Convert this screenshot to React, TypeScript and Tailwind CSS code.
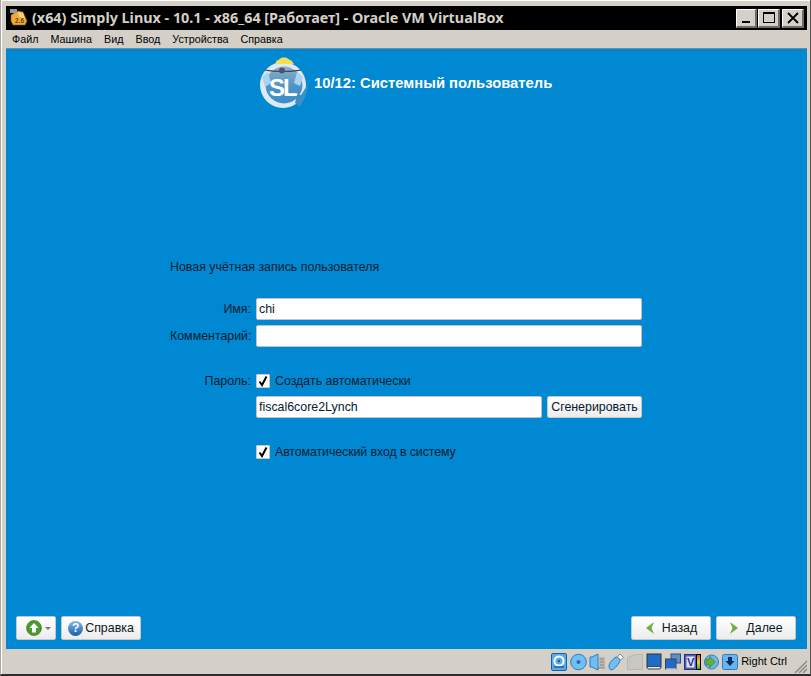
import React from 'react';

const sans = "font-['Liberation_Sans',Arial,sans-serif]";
const tahoma = "font-['Noto_Sans',sans-serif]";

function Check() {
  return (
    <div className="w-[14px] h-[14px] bg-white border border-[#c8c8c8] rounded-[1px] flex items-center justify-center">
      <svg width="12" height="12" viewBox="0 0 12 12">
        <path d="M2.5 6.5 L5 10 L9.5 1.5" fill="none" stroke="#000" strokeWidth="2" />
      </svg>
    </div>
  );
}

function Logo() {
  return (
    <svg width="50" height="52" viewBox="0 0 50 52">
      <defs>
        <linearGradient id="disc" x1="0" y1="0" x2="0" y2="1">
          <stop offset="0" stopColor="#8fb0cc" />
          <stop offset="0.55" stopColor="#4a93c6" />
          <stop offset="1" stopColor="#3b8fca" />
        </linearGradient>
      </defs>
      <path d="M17 7 C19 2 22 0.5 25 0.5 C28 0.5 31 2 34 7 Z" fill="#f2de5a" />
      <circle cx="24" cy="28" r="23" fill="#dfe9f2" />
      <circle cx="25" cy="28" r="18.5" fill="url(#disc)" />
      <path d="M18 3 C21 5 28 5 32 3 L35 7 L16 7 Z" fill="#f2de5a" />
      <path d="M6 13 C16 15 32 15 42 13" fill="none" stroke="#3c4654" strokeWidth="1.2" />
      <circle cx="23" cy="13.5" r="3" fill="#4c5666" />
      <path d="M3 20 L9 15 L12 26 L6 30 Z" fill="#a9d3f0" />
      <path d="M44 20 L38 15 L35 26 L41 29 Z" fill="#a9d3f0" />
      <text x="10" y="39" fontFamily="Liberation Sans" fontWeight="700" fontSize="24" fill="#fff" letterSpacing="-2">SL</text>
      <path d="M36 46 L38 38 L42 38 L49 27 L47 38 L41 50 Z" fill="#3d8fc9" />
    </svg>
  );
}

function VboxIcon() {
  return (
    <svg width="18" height="18" viewBox="0 0 18 18">
      <path d="M1 6 L8 2 L13 3 L17 12 L15 16 L3 16 L1 12 Z" fill="#f0ab3c" stroke="#8d5a14" strokeWidth="0.6" />
      <path d="M8 3 L13 4 L15 10 L9 8 Z" fill="#f7d377" />
      <rect x="0" y="0" width="7" height="4" fill="#9a9a9a" />
      <text x="5" y="14" fontFamily="Liberation Sans" fontWeight="700" fontSize="6.5" fill="#6f430c">2.6</text>
    </svg>
  );
}

function WinButton({ w, children }: { w: string; children: React.ReactNode }) {
  return (
    <div className={`${w} h-[19px] bg-[#d4d0c8] border-t border-l border-white border-r-2 border-b-2 border-r-[#6e6c66] border-b-[#6e6c66] flex items-center justify-center`}>
      {children}
    </div>
  );
}

function Bevel({ w, children }: { w: string; children: React.ReactNode }) {
  return (
    <div className={`${w} h-[24px] rounded-[2px] border border-[#c4c8cc] bg-gradient-to-b from-white to-[#ececec] flex items-center justify-center gap-[3px] text-[12.4px] text-[#0c1a24]`}>
      {children}
    </div>
  );
}

function UpIcon() {
  return (
    <svg width="16" height="16" viewBox="0 0 16 16">
      <circle cx="8" cy="8" r="7.5" fill="#4b9a2c" stroke="#356f1f" strokeWidth="0.6" />
      <path d="M8 3 L12.5 8 L10 8 L10 12.5 L6 12.5 L6 8 L3.5 8 Z" fill="#fff" />
    </svg>
  );
}

function HelpIcon() {
  return (
    <div className="w-[15px] h-[15px] rounded-full bg-gradient-to-b from-[#7dbbec] to-[#125fa8] text-white text-[12px] font-bold leading-[15px] text-center">
      ?
    </div>
  );
}

function Chevron({ flip }: { flip?: boolean }) {
  return (
    <svg width="10" height="14" viewBox="0 0 10 14">
      <path
        d={flip ? 'M1 1 L9 7 L1 13 L3.5 7 Z' : 'M9 1 L1 7 L9 13 L6.5 7 Z'}
        fill="#6fae45"
      />
    </svg>
  );
}

function StatusIcons() {
  return (
    <div className="flex items-center h-[18px]">
      {/* hdd */}
      <svg width="16" height="18" viewBox="0 0 16 18" className="mr-[3px]">
        <rect x="0.5" y="0.5" width="15" height="17" rx="1.5" fill="#58aee8" stroke="#1c5fa8" />
        <circle cx="8" cy="8" r="4.6" fill="none" stroke="#fff" strokeWidth="2" />
        <circle cx="8" cy="8" r="1.2" fill="#1c5fa8" />
        <path d="M3 14 H13" stroke="#1c5fa8" strokeWidth="1.5" />
      </svg>
      {/* cd */}
      <svg width="17" height="18" viewBox="0 0 17 18" className="mr-[2px]">
        <circle cx="8.5" cy="9" r="7.8" fill="#72c0f0" stroke="#2a7cc4" />
        <circle cx="8.5" cy="9" r="2" fill="#1e6eb8" />
      </svg>
      {/* audio */}
      <svg width="17" height="18" viewBox="0 0 17 18" className="mr-[2px]">
        <rect x="10" y="4" width="6" height="11" fill="#bdb9b1" />
        <path d="M11 6 H15 M11 9 H15 M11 12 H15 M9 15 H16" stroke="#8b8880" />
        <path d="M1 4 H3 L9 1 V17 L3 14 H1 Z" fill="#74bdf0" stroke="#2a7cc4" />
      </svg>
      {/* usb */}
      <svg width="16" height="18" viewBox="0 0 16 18" className="mr-[3px]">
        <path d="M1 13 C1 9 7 4 9 4 L12 7 C12 10 6 17 3 17 C2 17 1 15 1 13 Z" fill="#74bdf0" stroke="#2a7cc4" />
        <path d="M9.5 4 L12 1 L15.5 4.5 L12.5 7 Z" fill="#fff" stroke="#7a8a98" />
      </svg>
      {/* shared folder, disabled */}
      <svg width="16" height="18" viewBox="0 0 16 18" className="mr-[3px]">
        <path d="M0.5 4.5 L8 1.5 H15.5 V16.5 H0.5 Z" fill="#c9c7c2" stroke="#b9b6b0" />
      </svg>
      {/* display */}
      <svg width="16" height="18" viewBox="0 0 16 18" className="mr-[3px]">
        <rect x="1" y="1" width="14" height="13" fill="#1f6cc8" stroke="#333" />
        <path d="M1 14 L2 16 H14 L15 14" fill="#e6e6e6" stroke="#444" />
      </svg>
      {/* shared screens */}
      <svg width="16" height="18" viewBox="0 0 16 18" className="mr-[3px]">
        <rect x="6" y="1" width="9.5" height="9" fill="#5d8fcc" stroke="#2b4f86" />
        <rect x="0.5" y="6" width="10.5" height="10" fill="#1f6cc8" stroke="#444" />
        <path d="M1 16 H11" stroke="#fff" />
      </svg>
      {/* vt-x + cpu bar */}
      <div className="flex items-center mr-[3px]">
        <svg width="13" height="18" viewBox="0 0 13 18">
          <rect x="0.5" y="1.5" width="12" height="15" fill="#4f5fc0" stroke="#273076" />
          <rect x="2.5" y="3.5" width="8" height="11" fill="#dfe2f5" />
          <text x="3" y="13" fontFamily="Liberation Sans" fontWeight="700" fontSize="11" fill="#2a3590">V</text>
        </svg>
        <div className="w-[5px] h-[16px] border border-black bg-gradient-to-b from-[#e44b1f] via-[#e8d72e] to-[#3aa13a] ml-[-1px]" />
      </div>
      {/* network */}
      <svg width="15" height="18" viewBox="0 0 16 18" className="mr-[3px]">
        <circle cx="8" cy="9" r="7.5" fill="#6fb7e8" stroke="#2a7cc4" />
        <path d="M6 3 L12 9 L6 15 L6 12 L2 12 L2 6 L6 6 Z" fill="#62b03a" stroke="#2f7a1e" strokeWidth="0.6" />
      </svg>
      {/* host key */}
      <svg width="16" height="18" viewBox="0 0 16 18">
        <rect x="0.5" y="1.5" width="15" height="15" rx="2" fill="#67b5ea" stroke="#2a7cc4" />
        <path d="M6 4 H10 V8 H12.5 L8 13 L3.5 8 H6 Z" fill="#0f2f6c" />
      </svg>
    </div>
  );
}

export default function App() {
  return (
    <div className={`${sans} w-[811px] h-[676px] overflow-hidden bg-[#d4d0c8] border-l border-[#aaa5a2] border-r border-r-[#55544f] border-b-2 border-b-[#2e2c2a] flex flex-col`}>
      <div className="flex-1 flex flex-col border-l border-t border-white pl-1 pr-[3px] pt-[5px]">
        <div className="h-6 bg-black flex items-center pl-[4px] pr-[3px] shrink-0">
          <VboxIcon />
          <div className={`${tahoma} ml-[4px] text-[14.35px] font-bold text-[#d4d0c8] whitespace-nowrap flex-1`}>
            (x64) Simply Linux - 10.1 - x86_64 [Работает] - Oracle VM VirtualBox
          </div>
          <div className="flex items-center">
            <WinButton w="w-[21px]">
              <div className="flex justify-center pt-[9px]"><div className="w-[8px] h-[2px] bg-black" /></div>
            </WinButton>
            <div className="ml-px">
              <WinButton w="w-[22px]">
                <div className="w-[12px] h-[11px] border border-black border-t-2" />
              </WinButton>
            </div>
            <div className="ml-[2px]">
              <WinButton w="w-[22px]">
                <svg width="12" height="12" viewBox="0 0 12 12"><path d="M1 1 L11 11 M11 1 L1 11" stroke="#000" strokeWidth="1.8" /></svg>
              </WinButton>
            </div>
          </div>
        </div>

        <div className="h-[18px] flex items-center gap-3 pl-[6px] text-[10.75px] text-black shrink-0">
          <span>Файл</span>
          <span>Машина</span>
          <span>Вид</span>
          <span>Ввод</span>
          <span>Устройства</span>
          <span>Справка</span>
        </div>

        <div className="flex-1 bg-[#0088d2] border-t border-[#7a8a90] flex flex-col">
          <div className="flex items-center pl-[253px] pt-[6px] h-[62px] shrink-0">
            <Logo />
            <div className="ml-[5px] text-[14.8px] font-bold text-white">10/12: Системный пользователь</div>
          </div>

          <div className="pl-[164px] pt-[149px] text-[12.4px] text-[#062030] w-[640px]">
            <div className="h-[14px] leading-[14px]">Новая учётная запись пользователя</div>

            <div className="mt-[24px] grid grid-cols-[81px_386px] gap-x-[5px] items-start">
              <div className="text-right leading-[22px] h-[22px] whitespace-nowrap">Имя:</div>
              <div className="h-[22px] bg-white border border-[#c0c4c8] rounded-[2px] pl-[2px] leading-[20px]">chi</div>
              <div className="text-right leading-[22px] h-[22px] mt-[5px] whitespace-nowrap">Комментарий:</div>
              <div className="h-[22px] bg-white border border-[#c0c4c8] rounded-[2px] mt-[5px]" />
              <div className="text-right mt-[27px] leading-[14px]">Пароль:</div>
              <div className="mt-[27px] flex items-center gap-[5px] h-[14px]">
                <Check />
                <span>Создать автоматически</span>
              </div>
              <div />
              <div className="flex mt-[8px] gap-[5px]">
                <div className="w-[286px] h-[22px] bg-white border border-[#c0c4c8] rounded-[2px] pl-[2px] leading-[20px]">fiscal6core2Lynch</div>
                <div className="w-[95px] h-[22px] rounded-[2px] border border-[#c4c8cc] bg-gradient-to-b from-white to-[#ececec] text-center leading-[20px] whitespace-nowrap">Сгенерировать</div>
              </div>
              <div />
              <div className="mt-[27px] flex items-center gap-[5px] h-[14px]">
                <Check />
                <span className="tracking-[-0.1px]">Автоматический вход в систему</span>
              </div>
            </div>
          </div>

          <div className="mt-auto mb-[9px] flex items-center pl-[10px] pr-[11px]">
            <Bevel w="w-[40px]">
              <div className="pl-[5px] flex items-center gap-[3px]">
                <UpIcon />
                <span className="w-0 h-0 border-x-[3px] border-x-transparent border-t-[3px] border-t-[#777]" />
              </div>
            </Bevel>
            <div className="ml-[5px]">
              <Bevel w="w-[80px]">
                <HelpIcon />
                <span className="ml-[-1px]">Справка</span>
              </Bevel>
            </div>
            <div className="ml-auto flex gap-[5px]">
              <Bevel w="w-[80px]">
                <div className="mr-[3px]"><Chevron /></div>
                <span className="ml-[1px]">Назад</span>
              </Bevel>
              <Bevel w="w-[80px]">
                <div className="mr-[3px]"><Chevron flip /></div>
                <span className="ml-[1px]">Далее</span>
              </Bevel>
            </div>
          </div>
        </div>

        <div className="h-[25px] flex items-center justify-end shrink-0 relative pr-[20px]">
          <StatusIcons />
          <span className="ml-[3px] text-[11px] text-black whitespace-nowrap">Right Ctrl</span>
          <svg width="13" height="13" viewBox="0 0 13 13" className="absolute right-0 bottom-[1px]">
            <path d="M13 1 L1 13 M13 5 L5 13 M13 9 L9 13" stroke="#8a8780" strokeWidth="1.4" />
          </svg>
        </div>
      </div>
    </div>
  );
}
